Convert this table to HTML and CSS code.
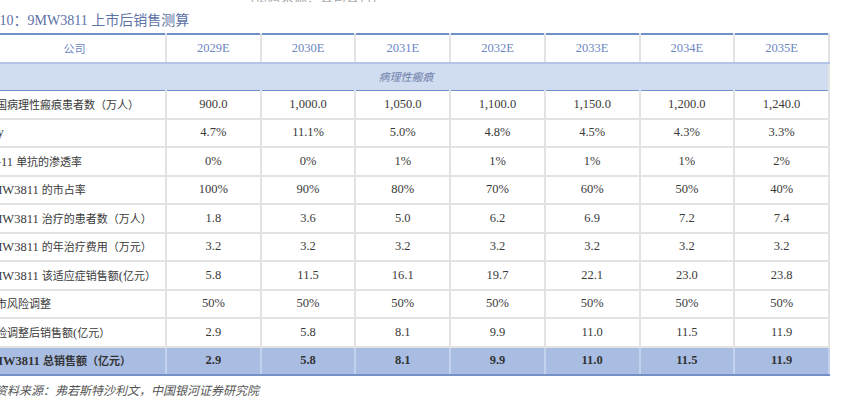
FILE: index.html
```html
<!DOCTYPE html>
<html lang="zh">
<head>
<meta charset="utf-8">
<title>9MW3811 上市后销售测算</title>
<link rel="stylesheet" href="styles.css">
</head>
<body>
<div class="page">
  <div class="cutline"><span>（资料来源：公司公告）</span></div>
  <h1 class="title">表 10：9MW3811 上市后销售测算</h1>
  <table class="sheet">
    <colgroup>
      <col class="c-label">
      <col><col><col><col><col><col><col>
    </colgroup>
    <thead>
      <tr class="head">
        <th><span class="zh">公司</span></th>
        <th>2029E</th><th>2030E</th><th>2031E</th><th>2032E</th><th>2033E</th><th>2034E</th><th>2035E</th>
      </tr>
    </thead>
    <tbody>
      <tr class="section"><td colspan="8"><span class="zh">病理性瘢痕</span></td></tr>
      <tr><td class="lbl"><span class="zh">中国病理性瘢痕患者数（万人）</span></td><td>900.0</td><td>1,000.0</td><td>1,050.0</td><td>1,100.0</td><td>1,150.0</td><td>1,200.0</td><td>1,240.0</td></tr>
      <tr><td class="lbl">yoy</td><td>4.7%</td><td>11.1%</td><td>5.0%</td><td>4.8%</td><td>4.5%</td><td>4.3%</td><td>3.3%</td></tr>
      <tr><td class="lbl">IL-11 <span class="zh">单抗的渗透率</span></td><td>0%</td><td>0%</td><td>1%</td><td>1%</td><td>1%</td><td>1%</td><td>2%</td></tr>
      <tr><td class="lbl">9MW3811 <span class="zh">的市占率</span></td><td>100%</td><td>90%</td><td>80%</td><td>70%</td><td>60%</td><td>50%</td><td>40%</td></tr>
      <tr><td class="lbl">9MW3811 <span class="zh">治疗的患者数（万人）</span></td><td>1.8</td><td>3.6</td><td>5.0</td><td>6.2</td><td>6.9</td><td>7.2</td><td>7.4</td></tr>
      <tr><td class="lbl">9MW3811 <span class="zh">的年治疗费用（万元）</span></td><td>3.2</td><td>3.2</td><td>3.2</td><td>3.2</td><td>3.2</td><td>3.2</td><td>3.2</td></tr>
      <tr><td class="lbl">9MW3811 <span class="zh">该适应症销售额</span>(<span class="zh">亿元）</span></td><td>5.8</td><td>11.5</td><td>16.1</td><td>19.7</td><td>22.1</td><td>23.0</td><td>23.8</td></tr>
      <tr><td class="lbl"><span class="zh">上市风险调整</span></td><td>50%</td><td>50%</td><td>50%</td><td>50%</td><td>50%</td><td>50%</td><td>50%</td></tr>
      <tr><td class="lbl"><span class="zh">风险调整后销售额</span>(<span class="zh">亿元）</span></td><td>2.9</td><td>5.8</td><td>8.1</td><td>9.9</td><td>11.0</td><td>11.5</td><td>11.9</td></tr>
      <tr class="total"><td class="lbl">9MW3811 <span class="zh">总销售额（亿元）</span></td><td>2.9</td><td>5.8</td><td>8.1</td><td>9.9</td><td>11.0</td><td>11.5</td><td>11.9</td></tr>
    </tbody>
  </table>
  <p class="source">资料来源：弗若斯特沙利文，中国银河证券研究院</p>
</div>
</body>
</html>
```

FILE: styles.css
```css
html, body {
  margin: 0;
  padding: 0;
  background: #ffffff;
}

body {
  font-family: "Liberation Serif", "Noto Sans CJK SC", serif;
  color: #3a3a3a;
  overflow: hidden;
}

.page {
  margin-left: -16px;
  width: 846px;
}

.cutline {
  height: 2px;
  overflow: hidden;
  display: flex;
  align-items: flex-end;
  padding-left: 258px;
}

.cutline span {
  font-family: "Noto Sans CJK SC", sans-serif;
  font-size: 13px;
  line-height: 11px;
  color: #a8a8a8;
  flex: none;
}

.title {
  margin: 10px 0 3px -2px;
  font-family: "Liberation Serif", "Noto Sans CJK SC", serif;
  font-weight: normal;
  font-size: 14px;
  line-height: 18px;
  color: #5d72a6;
}

.sheet {
  width: 846px;
  border-collapse: collapse;
  table-layout: fixed;
  font-size: 12.5px;
}

.c-label {
  width: 182px;
}

.zh {
  font-family: "Noto Sans CJK SC", sans-serif;
  font-size: 11px;
}

.sheet th,
.sheet td {
  height: 26.5px;
  padding: 0;
  text-align: center;
  vertical-align: middle;
  white-space: nowrap;
  overflow: hidden;
  border-left: 2px solid #e3e3e3;
  border-right: 2px solid #e3e3e3;
  border-bottom: 2px solid #e3e3e3;
}

.sheet th:first-child,
.sheet td:first-child {
  border-left: none;
}

.head th {
  font-weight: normal;
  color: #6b86c3;
  border-top: 2px solid #7090c8;
  border-bottom: 2px solid #b3c4e6;
}

.section td {
  background: #d0ddf0;
  color: #6f80aa;
  font-style: italic;
  border-bottom: 1px solid #6f8fc8;
  border-left: none;
  border-right: 2px solid #e3e3e3;
}

.sheet td.lbl {
  text-align: left;
  padding-left: 1px;
}

.total td {
  background: #a9bde3;
  font-weight: bold;
  color: #333333;
  border-left-color: #c4d2ee;
  border-right-color: #c4d2ee;
  border-bottom: 2px solid #7490c6;
}

.total .zh {
  font-weight: bold;
}

.source {
  margin: 6px 0 0 11px;
  font-family: "Noto Sans CJK SC", sans-serif;
  font-style: italic;
  font-size: 12px;
  line-height: 16px;
  color: #555555;
}
```
